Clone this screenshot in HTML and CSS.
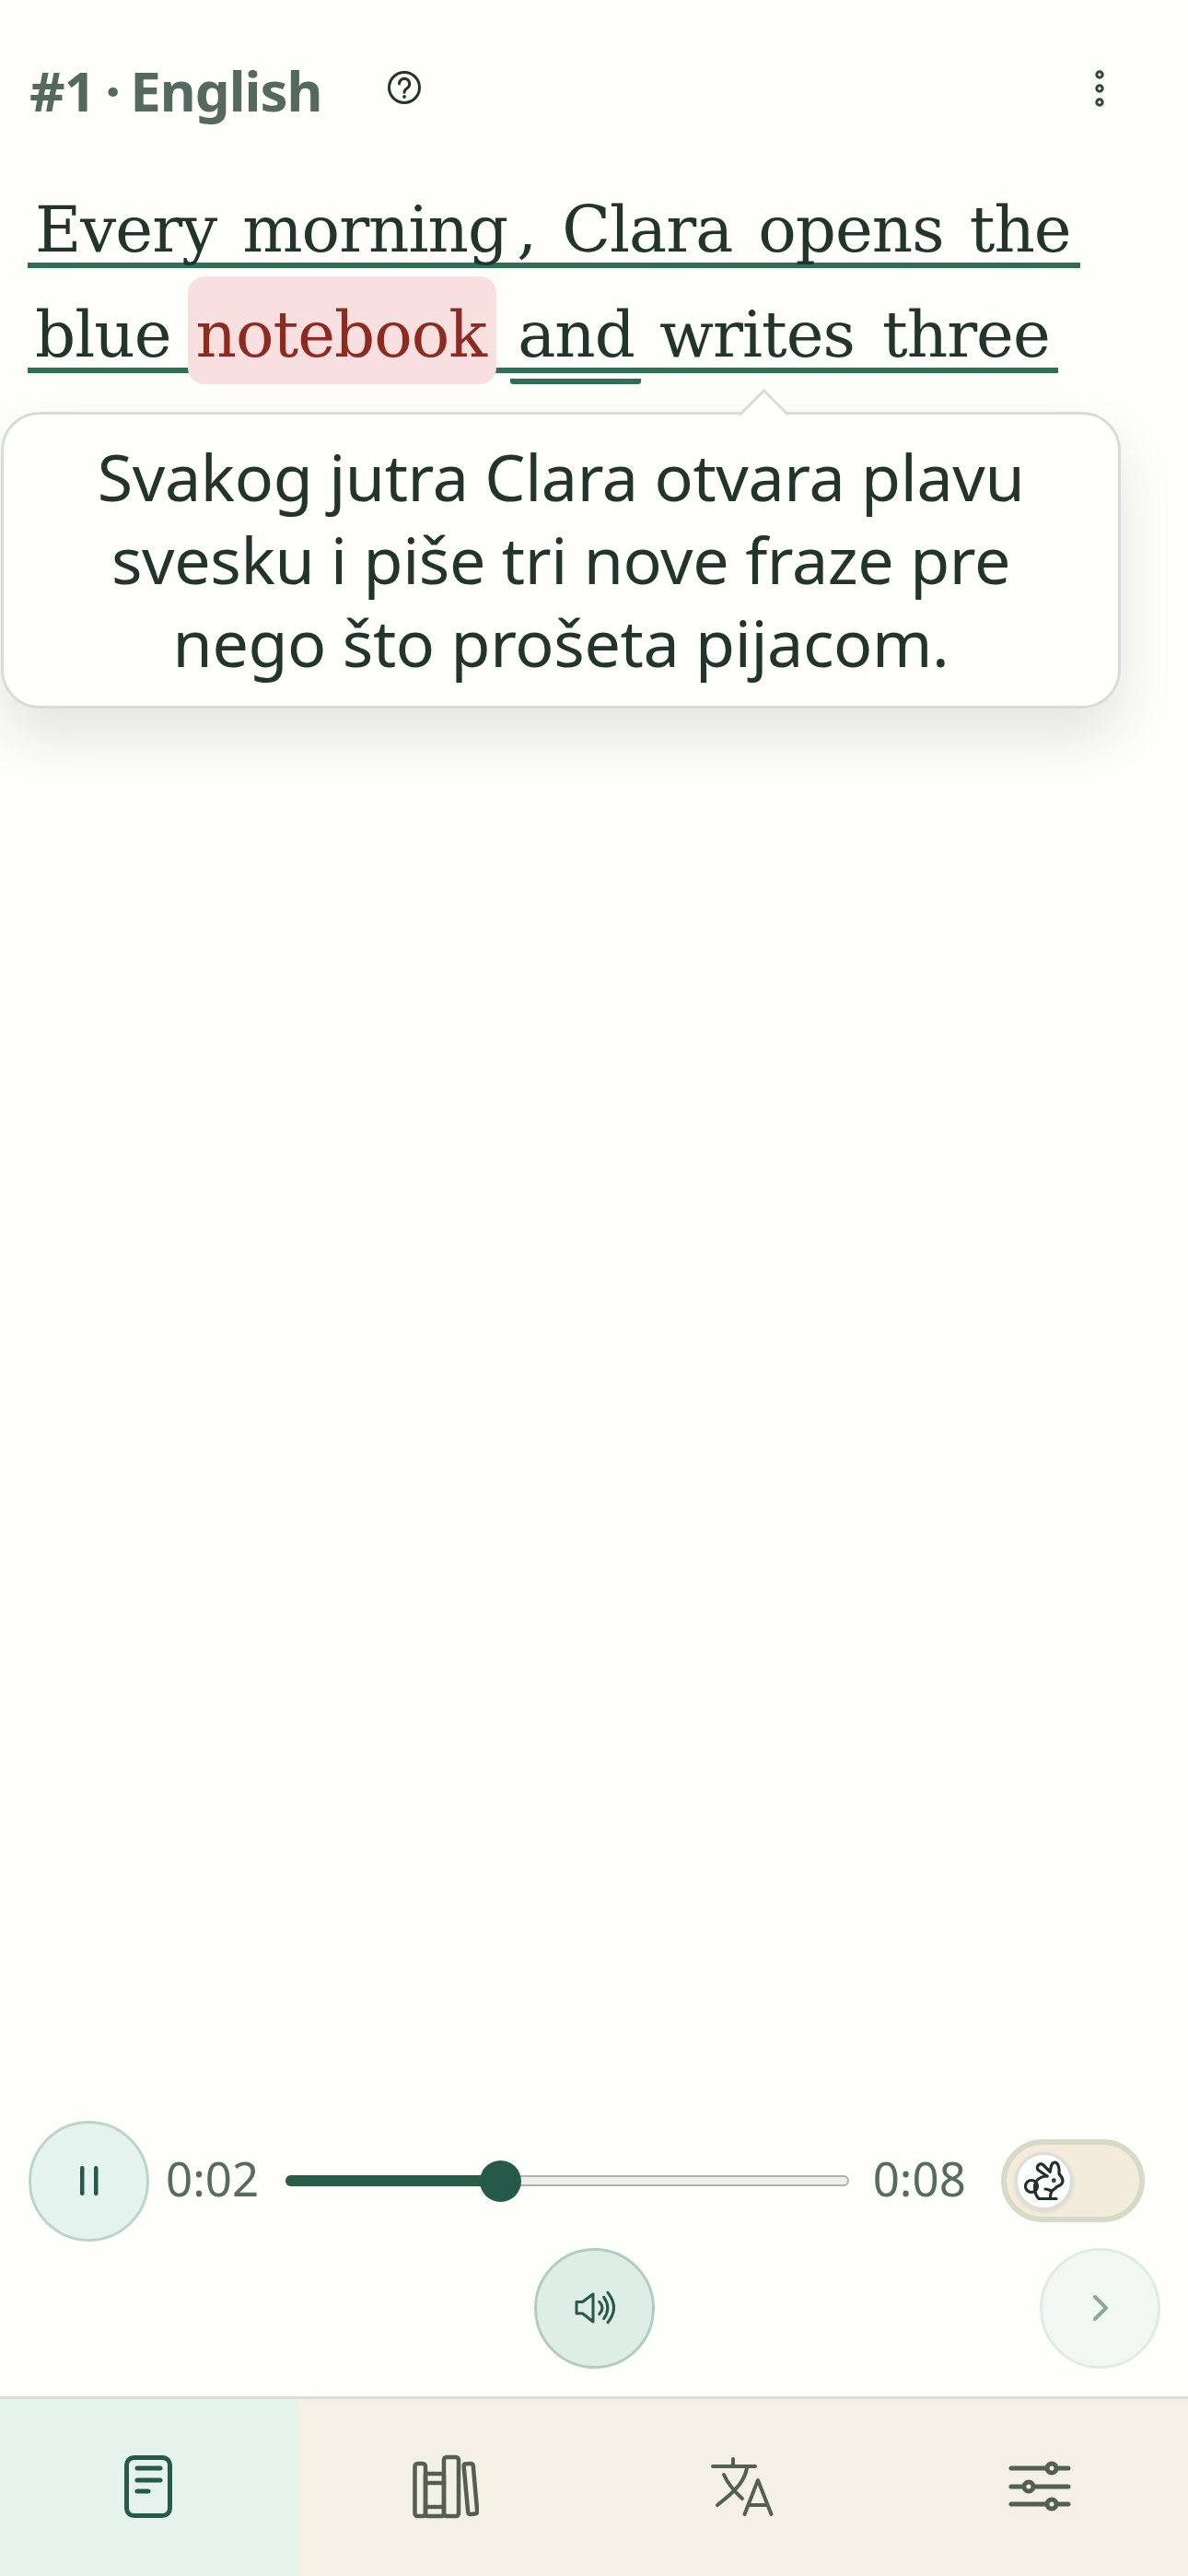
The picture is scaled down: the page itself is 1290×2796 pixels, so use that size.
FILE: index.html
```html
<!DOCTYPE html>
<html lang="en">
<head>
<meta charset="utf-8">
<title>Reader</title>
<link rel="stylesheet" href="styles.css">
</head>
<body>
<div class="app">
  <header class="top">
    <div class="title-group">
      <h1 class="title">#1 · English</h1>
      <svg class="help" viewBox="0 0 36 36" fill="none"><circle cx="18" cy="18" r="16.5" stroke="#22352d" stroke-width="3"/><path d="M12.5 14a5.6 5.6 0 1 1 8.6 4.7c-1.900 1.200-3.100 2.200-3.100 4.500" stroke="#22352d" stroke-width="3" stroke-linecap="round"/><circle cx="18" cy="28" r="1.9" fill="#22352d"/></svg>
    </div>
    <svg class="more" viewBox="0 0 12 42" fill="none"><circle cx="6" cy="6" r="3.2" stroke="#33443d" stroke-width="3"/><circle cx="6" cy="21" r="3.2" stroke="#33443d" stroke-width="3"/><circle cx="6" cy="36" r="3.2" stroke="#33443d" stroke-width="3"/></svg>
  </header>

  <div class="reader">
    <div class="line line-one">
      <span class="word">Every</span><span class="word">morning</span><span class="word comma">,</span><span class="word">Clara</span><span class="word">opens</span><span class="word">the</span>
    </div>
    <div class="line line-two">
      <span class="word">blue</span><span class="word hl">notebook</span><span class="word cur">and</span><span class="word writes">writes</span><span class="word three">three</span>
    </div>
  </div>

  <div class="pop">
    <p>Svakog jutra Clara otvara plavu svesku i piše tri nove fraze pre nego što prošeta pijacom.</p>
  </div>

  <div class="spacer"></div>

  <section class="player">
    <div class="row-one">
      <button class="round pause" type="button"><svg width="20" height="34" viewBox="0 0 20 34"><rect x="0" y="1" width="4.5" height="32" rx="2" fill="#25594a"/><rect x="15" y="1" width="4.5" height="32" rx="2" fill="#25594a"/></svg></button>
      <span class="time time-a">0:02</span>
      <div class="track"><div class="fill" style="width:38%"></div><div class="thumb"></div></div>
      <span class="time time-b">0:08</span>
      <div class="toggle"><div class="knob">
        <svg width="46" height="46" viewBox="0 0 46 46" fill="none" stroke="#1f332b" stroke-width="3.2" stroke-linecap="round" stroke-linejoin="round"><circle cx="9" cy="28" r="6.500"/><path d="M26 17 16.500 10.500C13 7 18 1.500 22 5L29.300 12.300C30 6 31 2 34.500 2 38.500 2.500 39.500 9 39 14.500 41.500 17 43 20 43 22.500 42.500 26 40 27.500 36.500 28.500 34.500 31 33 32 31 33"/><path d="M26 17C18 17 12.500 22 12.500 29 12.500 35 14.500 39 17 41.500H36"/><path d="M24 31C26.500 31 29 32.500 31 33 29.500 36 29.300 39 29.300 41.500"/><circle cx="33.300" cy="21.700" r=".8" fill="#1f332b"/></svg>
      </div></div>
    </div>
    <div class="row-two">
      <button class="round speak" type="button"><svg width="44" height="36" viewBox="0 0 44 36" fill="none" stroke="#25594a" stroke-width="3" stroke-linecap="round" stroke-linejoin="round"><path d="M2 11.500H8.500L20 3V33L8.500 24H2Z"/><path d="M26.700 11.300Q33.300 18 26.700 24.700"/><path d="M31.700 6.300Q40 18 31.700 29.700"/><path d="M36 1.300Q49 18 36 33.700"/></svg></button>
      <button class="round next" type="button"><svg width="18" height="30" viewBox="0 0 18 30" fill="none"><path d="M3 3l12 12L3 27" stroke="#8aa59b" stroke-width="4" stroke-linecap="round" stroke-linejoin="round"/></svg></button>
    </div>
  </section>

  <nav class="tabs">
    <div class="tab active"><svg width="72" height="72" viewBox="0 0 72 72" fill="none" stroke="#25594a" stroke-width="5" stroke-linecap="round" stroke-linejoin="round"><rect x="12.500" y="4.500" width="47" height="63" rx="8"/><path d="M24 16h25M24 29h25M24 41h12"/></svg></div>
    <div class="tab"><svg width="72" height="72" viewBox="0 0 72 72" fill="none" stroke="#535f52" stroke-width="4.500" stroke-linecap="round" stroke-linejoin="round"><rect x="2.500" y="11" width="11.500" height="57" rx="3"/><rect x="14" y="22" width="20" height="46" rx="2"/><rect x="34" y="4" width="16" height="64" rx="3"/><path d="M56.500 11.500l6-.5q3-.2 3.300 2.500l4.400 49q.2 2.700-2.500 3l-4.500.5q-2.700.3-3-2.500l-4.500-49q-.2-2.800.800-3z"/><path d="M14 32h20M14 58h20"/></svg></div>
    <div class="tab"><svg width="72" height="72" viewBox="0 0 72 72" fill="none" stroke="#535f52" stroke-width="4" stroke-linecap="round" stroke-linejoin="round"><path d="M4 14h46M26 6v8"/><path d="M41 16c-2.500 13-10 23-32 40"/><path d="M16 23c4 9 10 17 20 26"/><path d="M38.500 66L53 29l14.500 37M43 56h20"/></svg></div>
    <div class="tab"><svg width="72" height="72" viewBox="0 0 72 72" fill="none" stroke="#535f52" stroke-width="5" stroke-linecap="round"><path d="M5 16h62M5 36h62M5 55h62"/><circle cx="49" cy="16" r="5" fill="#f5f0e6"/><circle cx="24" cy="36" r="5" fill="#f5f0e6"/><circle cx="49" cy="55" r="5" fill="#f5f0e6"/></svg></div>
  </nav>
</div>
</body>
</html>
```

FILE: styles.css
```css
* { box-sizing: border-box; }
html, body { margin: 0; padding: 0; }
body { background: #fefefb; }
.app { width: 1290px; height: 2796px; display: flex; flex-direction: column; overflow: hidden; font-family: "Noto Sans", sans-serif; color: #22352d; }

.top { height: 177px; padding: 67px 90px 0 32px; display: flex; justify-content: space-between; align-items: flex-start; }
.title-group { display: flex; align-items: center; gap: 71px; height: 62px; }
.title { margin: 0; font-family: "Noto Sans", sans-serif; font-size: 60px; line-height: 62px; font-weight: 700; color: #54695f; letter-spacing: -1px; word-spacing: -3.5px; }
.help { width: 36px; height: 36px; margin-bottom: 6px; }
.more { width: 12px; height: 42px; margin-top: 8px; }

.reader { padding-left: 30px; font-family: "DejaVu Serif", serif; font-size: 69px; line-height: 72px; letter-spacing: -1px; }
.line { display: flex; align-items: flex-end; height: 114px; border-bottom: 6px solid #2f6f55; color: #22352d; }
.line-one { width: 1143px; gap: 28px; padding-left: 8px; }
.line-two { width: 1119px; padding-left: 8px; }
.word { display: block; }
.comma { margin-left: -18px; }
.hl { color: #8f2a20; background: #f9e0e0; border-radius: 18px; padding: 27px 11px 18px 9px; margin: 0 0 -18px 18px; }
.cur { margin: 0 0 -18px 15px; padding: 0 7px 12px 8px; border-bottom: 6px solid #2f6f55; border-radius: 3px; }
.writes { margin-left: 20px; }
.three { margin-left: 30px; }

.pop { position: relative; margin: 42px 0 0 1px; width: 1216px; height: 322px; padding: 22px 70px 0; background: #fffffc; border: 3px solid #d7dcd8; border-radius: 42px; box-shadow: 0 30px 60px rgba(34, 53, 45, 0.12); }
.pop::before { content: ""; position: absolute; left: 806px; top: -20.500px; width: 36px; height: 36px; background: #fffffc; border-left: 3px solid #d7dcd8; border-top: 3px solid #d7dcd8; transform: rotate(45deg); }
.pop p { position: relative; margin: 0; text-align: center; font-size: 70px; line-height: 90px; letter-spacing: -0.4px; color: #22352d; }

.spacer { flex: 1; }

.player { padding: 0 30px 30px 31px; display: flex; flex-direction: column; gap: 7px; }
.row-one { display: flex; align-items: center; height: 130px; }
.row-two { display: flex; align-items: center; justify-content: space-between; height: 132px; padding-left: 549px; }
.round { width: 131px; height: 131px; border-radius: 50%; padding: 0; display: flex; align-items: center; justify-content: center; flex: none; background: #e4f3ee; border: 3px solid #b9d5cc; }
.speak { background: #deeee6; border-color: #aecdc3; }
.next { background: #f1f7f3; border-color: #e1ebe6; }
.time { font-size: 51px; line-height: 60px; color: #566b62; margin-bottom: 7px; }
.time-a { margin-left: 18px; }
.track { position: relative; width: 612px; height: 12px; margin-left: 28.500px; background: #eeeeec; border: 2px solid #b0b0ae; border-radius: 6px; }
.fill { height: 12px; margin: -2px 0 0 -2px; background: #2a5c4a; border-radius: 6px; }
.thumb { position: absolute; left: 209px; top: -18.500px; width: 45px; height: 45px; border-radius: 50%; background: #25594a; }
.time-b { margin-left: 26px; }
.toggle { width: 156px; height: 90px; margin-left: 38.500px; padding: 8px 9px; background: #f3ebdc; border: 6px solid #d6dbc8; border-radius: 45px; }
.knob { width: 63px; height: 63px; border-radius: 50%; background: #fff; border: 3px solid #d8e0dc; display: flex; align-items: center; justify-content: center; box-shadow: 0 2px 4px rgba(120, 90, 70, 0.15); }

.tabs { height: 195px; flex: none; display: grid; grid-template-columns: repeat(4, 1fr); border-top: 3px solid #d6dfda; background: #f5f0e6; }
.tab { display: flex; align-items: center; justify-content: center; padding-bottom: 2px; }
.active { background: #e6f3ec; }
```
